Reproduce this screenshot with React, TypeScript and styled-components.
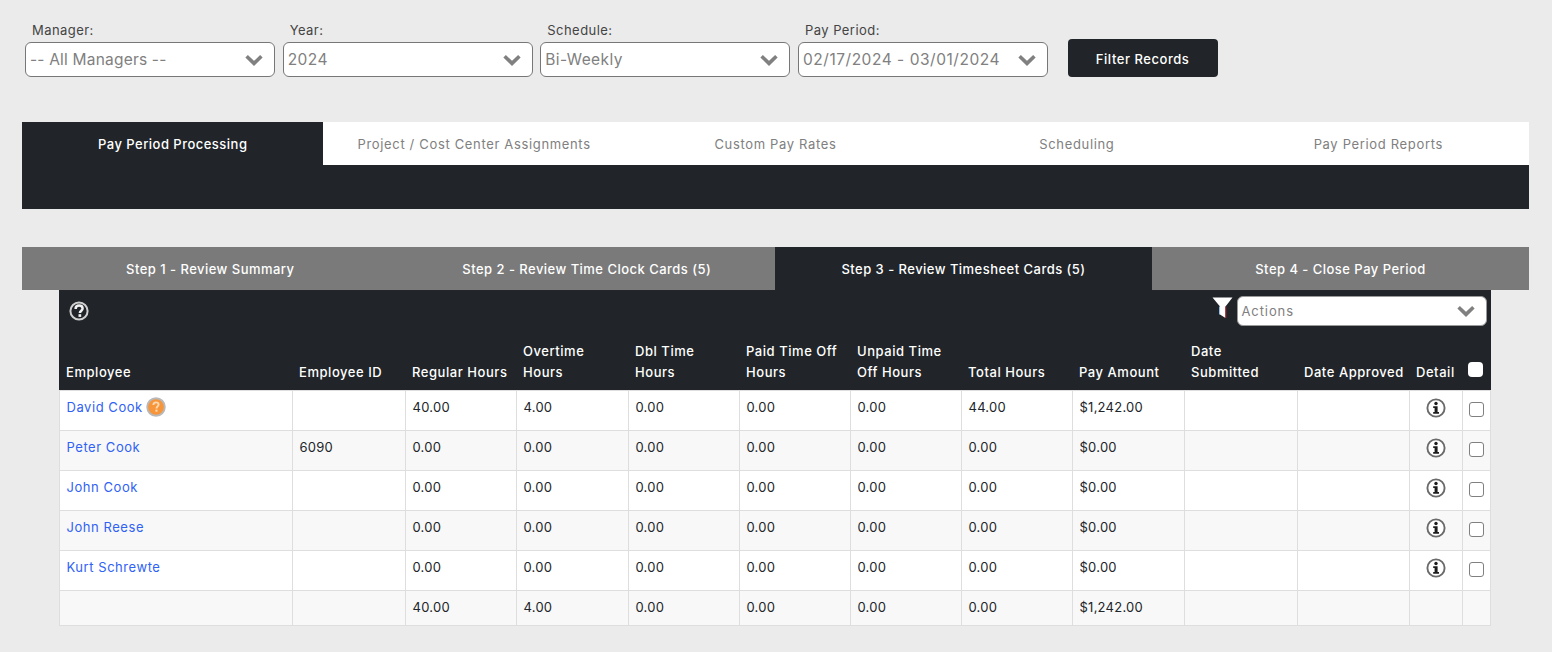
import React from "react";
import styled, { createGlobalStyle } from "styled-components";

const Global = createGlobalStyle`
  html, body { margin: 0; padding: 0; background: #ebebeb; }
  body { font-family: "Inter", "Liberation Sans", sans-serif; font-size: 13px; color: #212529; }
  * { box-sizing: border-box; }
`;

const Page = styled.div`
  width: 1552px;
  height: 652px;
  overflow: hidden;
  padding: 22px 23px 0 22px;
`;

const FilterBar = styled.div`
  display: flex;
  align-items: flex-end;
  padding-left: 3px;
  height: 55px;
`;

const Field = styled.div`
  width: 250px;
  margin-right: 7.67px;
  display: flex;
  flex-direction: column;
`;

const Label = styled.label`
  font-size: 13px;
  line-height: 16px;
  letter-spacing: 0.45px;
  color: #444;
  padding-left: 7px;
  margin-bottom: 4px;
`;

const SelectBox = styled.div<{ $h?: number; $size?: number; $spacing?: number }>`
  height: ${(p) => p.$h ?? 35}px;
  width: 100%;
  background: #fff;
  border: 1px solid #777;
  border-radius: 6px;
  padding: 0 11px 0 4px;
  display: flex;
  align-items: center;
  justify-content: space-between;
  color: #808080;
  font-size: ${(p) => p.$size ?? 15.5}px;
  letter-spacing: ${(p) => p.$spacing ?? 0.4}px;
  white-space: nowrap;
`;

const Chevron = () => (
  <svg width="18" height="12" viewBox="0 0 18 12" aria-hidden="true">
    <path d="M1.6 2.2 L9 9.4 L16.4 2.2" fill="none" stroke="#808080" strokeWidth="3.6" />
  </svg>
);

const FilterButton = styled.button`
  width: 150px;
  height: 38px;
  margin-left: 12px;
  padding-top: 2px;
  background: #212529;
  color: #fff;
  border: 0;
  border-radius: 4px;
  font: 500 13px "Inter", sans-serif;
  letter-spacing: 0.55px;
`;

const MainTabs = styled.div`
  margin-top: 45px;
  width: 1507px;
  display: grid;
  grid-template-columns: repeat(5, 1fr);
  background: #fff;
  height: 43px;
`;

const MainTab = styled.div<{ $active?: boolean }>`
  display: flex;
  align-items: center;
  justify-content: center;
  background: ${(p) => (p.$active ? "#212529" : "#fff")};
  color: ${(p) => (p.$active ? "#fff" : "#808080")};
  font-size: 13px;
  letter-spacing: ${(p) => (p.$active ? 0.48 : 0.66)}px;
  font-weight: ${(p) => (p.$active ? 500 : 400)};
`;

const DarkStrip = styled.div`
  width: 1507px;
  height: 44px;
  background: #212529;
`;

const StepTabs = styled.div`
  margin-top: 38px;
  width: 1507px;
  height: 43px;
  display: grid;
  grid-template-columns: 376.5px 376.5px 377px 377px;
  background: #7a7a7a;
`;

const StepTab = styled.div<{ $active?: boolean }>`
  display: flex;
  align-items: center;
  justify-content: center;
  background: ${(p) => (p.$active ? "#212529" : "#7a7a7a")};
  color: #fff;
  font-size: 13px;
  font-weight: 500;
  letter-spacing: 0.47px;
`;

const TableWrap = styled.div`
  margin-left: 37px;
  width: 1431.5px;
  background: #212529;
`;

const Toolbar = styled.div`
  height: 43px;
  padding: 7px 4px 0 9.5px;
  display: flex;
  justify-content: space-between;
  align-items: flex-start;
`;

const HelpSlot = styled.div`
  padding-top: 4px;
  display: flex;
`;

const ToolbarRight = styled.div`
  display: flex;
  align-items: flex-start;
  gap: 4px;
`;

const ActionsBox = styled(SelectBox)`
  width: 250px;
  border-color: #999;
  padding-right: 11px;
  margin-top: -1px;
`;

const Table = styled.table`
  width: 1431px;
  table-layout: fixed;
  border-collapse: collapse;
`;

const Th = styled.th`
  background: #212529;
  color: #fff;
  font-size: 13px;
  font-weight: 500;
  line-height: 21px;
  letter-spacing: 0.55px;
  text-align: left;
  vertical-align: bottom;
  white-space: nowrap;
  padding: 0 0 7px 6.5px;
  height: 57px;
`;

const Row = styled.tr<{ $alt?: boolean }>`
  background: ${(p) => (p.$alt ? "#f8f8f8" : "#fff")};
`;

const Td = styled.td`
  border: 1px solid #dedede;
  height: 40px;
  padding: 0 0 6px 6.5px;
  font-size: 13px;
  letter-spacing: 0.25px;
  color: #212529;
  vertical-align: middle;
  text-align: left;
`;

const TotalTd = styled(Td)`
  height: 35px;
  padding: 0 0 2px 6.5px;
`;

const IconTd = styled(Td)`
  padding: 0 1px 4px 0;
  text-align: center;
  line-height: 0;
`;

const CheckTd = styled(Td)`
  padding: 0 0 2px 0;
  line-height: 0;
`;

const NameLink = styled.a`
  color: #2f62f5;
  letter-spacing: 0.55px;
  text-decoration: none;
`;

const NameCell = styled.span`
  display: inline-flex;
  align-items: center;
  gap: 3px;
`;

const Check = styled.span`
  display: block;
  margin: 0 auto;
  width: 15px;
  height: 15px;
  background: #fff;
  border: 1px solid #808080;
  border-radius: 3px;
`;

const HeadCheck = styled(Check)`
  border: 0;
  border-radius: 4px;
  margin: 0 0 13px 5px;
`;

const CheckTh = styled(Th)`
  padding: 0;
`;

const HelpIcon = () => (
  <svg width="20" height="20" viewBox="0 0 20 20" aria-hidden="true">
    <circle cx="10" cy="10" r="8.6" fill="none" stroke="#d0d0d0" strokeWidth="2" />
    <path d="M6.6 8 C6.6 5.6 8.3 4.6 10.1 4.6 C12.1 4.6 13.6 5.8 13.6 7.6 C13.6 9.7 10.9 9.8 10.9 12.1" fill="none" stroke="#f2f2f2" strokeWidth="2.5" />
    <rect x="9.5" y="13.2" width="2.7" height="2.7" fill="#f2f2f2" />
  </svg>
);

const BadgeIcon = () => (
  <svg width="20" height="20" viewBox="0 0 20 20" aria-hidden="true">
    <circle cx="10" cy="10" r="8.8" fill="#f7953a" stroke="#b9b9b9" strokeWidth="1.9" />
    <path d="M7.4 8 C7.4 6.2 8.6 5.4 10 5.4 C11.5 5.4 12.6 6.3 12.6 7.6 C12.6 9.3 10.5 9.4 10.5 11.4" fill="none" stroke="#fcd9b4" strokeWidth="1.9" />
    <rect x="9.4" y="12.6" width="2.1" height="2.1" fill="#fcd9b4" />
  </svg>
);

const InfoIcon = () => (
  <svg width="20" height="20" viewBox="0 0 20 20" aria-hidden="true">
    <circle cx="10" cy="10" r="8.6" fill="#fff" stroke="#6a6a6a" strokeWidth="1.9" />
    <circle cx="10" cy="5.5" r="1.7" fill="#1c1c1c" />
    <path d="M7.2 8.2 H11.6 V13.9 H13 V15.7 H7.2 V13.9 H8.6 V10 H7.2 Z" fill="#1c1c1c" />
  </svg>
);

const FunnelIcon = () => (
  <svg width="21" height="22" viewBox="0 0 21 22" aria-hidden="true">
    <path d="M0.5 0.5 H20.5 L13.5 9.5 V21 L8 17.5 V9.5 Z" fill="#fff" />
    <path d="M13.8 9.5 V21" stroke="#b3202a" strokeWidth="1" />
    <path d="M7.6 9.5 V17.5" stroke="#9fd0f5" strokeWidth="1" />
  </svg>
);

const filters = [
  { label: "Manager:", value: "-- All Managers --", spacing: 0.2 },
  { label: "Year:", value: "2024", spacing: 0.45 },
  { label: "Schedule:", value: "Bi-Weekly", spacing: 0.4 },
  { label: "Pay Period:", value: "02/17/2024 - 03/01/2024", spacing: 0.53 },
];

const mainTabs = ["Pay Period Processing", "Project / Cost Center Assignments", "Custom Pay Rates", "Scheduling", "Pay Period Reports"];
const stepTabs = ["Step 1 - Review Summary", "Step 2 - Review Time Clock Cards (5)", "Step 3 - Review Timesheet Cards (5)", "Step 4 - Close Pay Period"];
const colWidths = [233, 113, 111, 112, 111, 111, 111, 111, 112, 113, 112, 53, 28];
const headers: React.ReactNode[] = [
  "Employee", "Employee ID", "Regular Hours", <>Overtime<br />Hours</>, <>Dbl Time<br />Hours</>,
  <>Paid Time Off<br />Hours</>, <>Unpaid Time<br />Off Hours</>, "Total Hours", "Pay Amount",
  <>Date<br />Submitted</>, "Date Approved", "Detail",
];

const rows = [
  { name: "David Cook", id: "", reg: "40.00", ot: "4.00", total: "44.00", pay: "$1,242.00", badge: true },
  { name: "Peter Cook", id: "6090", reg: "0.00", ot: "0.00", total: "0.00", pay: "$0.00" },
  { name: "John Cook", id: "", reg: "0.00", ot: "0.00", total: "0.00", pay: "$0.00" },
  { name: "John Reese", id: "", reg: "0.00", ot: "0.00", total: "0.00", pay: "$0.00" },
  { name: "Kurt Schrewte", id: "", reg: "0.00", ot: "0.00", total: "0.00", pay: "$0.00" },
];

export default function App() {
  return (
    <Page>
      <Global />
      <FilterBar>
        {filters.map((f) => (
          <Field key={f.label}>
            <Label>{f.label}</Label>
            <SelectBox $spacing={f.spacing}>
              {f.value}
              <Chevron />
            </SelectBox>
          </Field>
        ))}
        <FilterButton>Filter Records</FilterButton>
      </FilterBar>

      <MainTabs>
        {mainTabs.map((t, i) => (
          <MainTab key={t} $active={i === 0}>{t}</MainTab>
        ))}
      </MainTabs>
      <DarkStrip />

      <StepTabs>
        {stepTabs.map((t, i) => (
          <StepTab key={t} $active={i === 2}>{t}</StepTab>
        ))}
      </StepTabs>

      <TableWrap>
        <Toolbar>
          <HelpSlot><HelpIcon /></HelpSlot>
          <ToolbarRight>
            <FunnelIcon />
            <ActionsBox $h={30} $size={13} $spacing={0.9}>
              Actions
              <Chevron />
            </ActionsBox>
          </ToolbarRight>
        </Toolbar>
        <Table>
          <colgroup>
            {colWidths.map((w, i) => (
              <col key={i} style={{ width: w }} />
            ))}
          </colgroup>
          <thead>
            <tr>
              {headers.map((h, i) => (
                <Th key={i}>{h}</Th>
              ))}
              <CheckTh><HeadCheck /></CheckTh>
            </tr>
          </thead>
          <tbody>
            {rows.map((r, i) => (
              <Row key={r.name} $alt={i % 2 === 1}>
                <Td>
                  <NameCell>
                    <NameLink>{r.name}</NameLink>
                    {r.badge && <BadgeIcon />}
                  </NameCell>
                </Td>
                <Td>{r.id}</Td>
                <Td>{r.reg}</Td>
                <Td>{r.ot}</Td>
                <Td>0.00</Td>
                <Td>0.00</Td>
                <Td>0.00</Td>
                <Td>{r.total}</Td>
                <Td>{r.pay}</Td>
                <Td />
                <Td />
                <IconTd><InfoIcon /></IconTd>
                <CheckTd><Check /></CheckTd>
              </Row>
            ))}
            <Row $alt>
              <TotalTd />
              <TotalTd />
              <TotalTd>40.00</TotalTd>
              <TotalTd>4.00</TotalTd>
              <TotalTd>0.00</TotalTd>
              <TotalTd>0.00</TotalTd>
              <TotalTd>0.00</TotalTd>
              <TotalTd>0.00</TotalTd>
              <TotalTd>$1,242.00</TotalTd>
              <TotalTd />
              <TotalTd />
              <TotalTd />
              <TotalTd />
            </Row>
          </tbody>
        </Table>
      </TableWrap>
    </Page>
  );
}
